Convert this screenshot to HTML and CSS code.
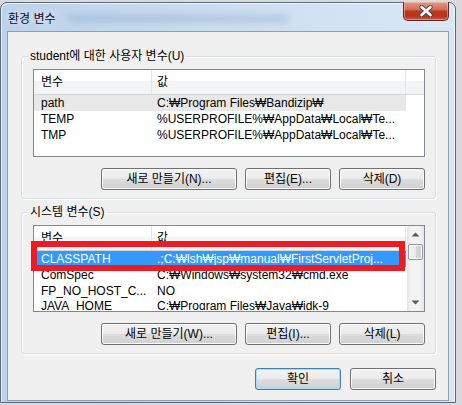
FILE: index.html
```html
<!DOCTYPE html>
<html lang="ko">
<head>
<meta charset="utf-8">
<title>환경 변수</title>
<link rel="stylesheet" href="styles.css">
</head>
<body>
<div class="window">
  <div class="titlebar">
    <span class="title">환경 변수</span>
    <span class="blur"></span>
    <button class="close" aria-label="닫기">
      <svg width="16" height="12" viewBox="0 0 16 12">
        <path d="M3.5 2 L12.5 10 M12.5 2 L3.5 10" stroke="#4a4a4a" stroke-width="4.4" stroke-linecap="round" fill="none"/>
        <path d="M3.5 2 L12.5 10 M12.5 2 L3.5 10" stroke="#ffffff" stroke-width="2.6" stroke-linecap="round" fill="none"/>
      </svg>
    </button>
  </div>
  <div class="client">
    <fieldset class="group first">
      <legend>student에 대한 사용자 변수(U)</legend>
      <div class="list">
        <div class="main">
          <div class="header">
            <div class="c1">변수</div>
            <div class="c2">값</div>
            <div class="c3"></div>
          </div>
          <div class="row gray"><div class="c1">path</div><div class="c2">C:₩Program Files₩Bandizip₩</div></div>
          <div class="row"><div class="c1">TEMP</div><div class="c2">%USERPROFILE%₩AppData₩Local₩Te...</div></div>
          <div class="row"><div class="c1">TMP</div><div class="c2">%USERPROFILE%₩AppData₩Local₩Te...</div></div>
        </div>
      </div>
      <div class="buttons">
        <button class="btn wide">새로 만들기(N)...</button>
        <button class="btn">편집(E)...</button>
        <button class="btn">삭제(D)</button>
      </div>
    </fieldset>

    <fieldset class="group second">
      <legend>시스템 변수(S)</legend>
      <div class="list-wrap">
        <div class="list sys">
          <div class="main">
            <div class="header">
              <div class="c1">변수</div>
              <div class="c2">값</div>
              <div class="c3"></div>
            </div>
            <div class="row selected"><div class="c1">CLASSPATH</div><div class="c2">.;C:₩lsh₩jsp₩manual₩FirstServletProj...</div></div>
            <div class="row"><div class="c1">ComSpec</div><div class="c2">C:₩Windows₩system32₩cmd.exe</div></div>
            <div class="row"><div class="c1">FP_NO_HOST_C...</div><div class="c2">NO</div></div>
            <div class="row last"><div class="c1">JAVA_HOME</div><div class="c2">C:₩Program Files₩Java₩jdk-9</div></div>
          </div>
          <div class="scrollbar">
            <div class="arrow">
              <svg width="9" height="5" viewBox="0 0 9 5"><path d="M0.5 4.5 L4.5 0.5 L8.5 4.5 Z" fill="#5a5a5a"/></svg>
            </div>
            <div class="thumb"></div>
            <div class="track"></div>
            <div class="arrow">
              <svg width="9" height="5" viewBox="0 0 9 5"><path d="M0.5 0.5 L4.5 4.5 L8.5 0.5 Z" fill="#5a5a5a"/></svg>
            </div>
          </div>
        </div>
        <div class="mark"></div>
      </div>
      <div class="buttons">
        <button class="btn wide">새로 만들기(W)...</button>
        <button class="btn">편집(I)...</button>
        <button class="btn">삭제(L)</button>
      </div>
    </fieldset>

    <div class="dialog-buttons">
      <button class="btn default">확인</button>
      <button class="btn">취소</button>
    </div>
  </div>
</div>
</body>
</html>
```

FILE: styles.css
```css
html, body {
  margin: 0;
  padding: 0;
}
body {
  width: 462px;
  height: 405px;
  overflow: hidden;
  background: #d9dadc;
  font-family: "Liberation Sans", "Noto Sans CJK KR", sans-serif;
  font-size: 12px;
  color: #000;
}
.window {
  box-sizing: border-box;
  margin-top: 2px;
  width: 456px;
  height: 401px;
  border: 1px solid #5a6878;
  border-radius: 7px 7px 0 0;
  background: linear-gradient(to right, #bcd2ea 0%, #c8dbef 40%, #d3e3f3 75%, #d9e7f5 100%);
  padding: 0 6px 2px 6px;
  box-shadow: inset 1px 1px 0 rgba(255,255,255,0.7), inset -1px 0 0 rgba(255,255,255,0.6);
}
.titlebar {
  height: 28px;
  display: flex;
  align-items: flex-start;
}
.title {
  margin-left: 1px;
  margin-top: 8px;
  line-height: 14px;
  font-family: "Noto Sans CJK KR", sans-serif;
  font-size: 12px;
  color: #0c0c14;
  text-shadow: 0 0 6px rgba(255,255,255,0.9);
}
.blur {
  margin-left: 12px;
  margin-top: 12px;
  width: 220px;
  height: 7px;
  background: rgba(110,140,180,0.28);
  filter: blur(3px);
}
.close {
  margin-left: auto;
  margin-top: -1px;
  width: 46px;
  height: 19px;
  box-sizing: border-box;
  border: 1px solid #5b2a24;
  border-top: none;
  border-radius: 0 0 5px 5px;
  background: linear-gradient(#e29a88 0%, #d2705c 40%, #bd3620 52%, #b8331f 78%, #cc5a43 100%);
  box-shadow: inset 0 0 0 1px rgba(255,210,200,0.45);
  padding: 0;
  display: flex;
  align-items: center;
  justify-content: center;
}
.client {
  box-sizing: border-box;
  width: 442px;
  height: 370px;
  border: 1px solid #909eb0;
  background: #f0f0f0;
  padding: 0 12px 0 13px;
  display: flex;
  flex-direction: column;
}
.group {
  margin: 0;
  min-width: 0;
  border: 1px solid #d5dfe5;
  border-radius: 3px;
  box-shadow: inset 1px 1px 0 #fff, 1px 1px 0 #fff;
  padding: 6px 10px 8px 11px;
}
.group.first {
  margin-top: 17px;
}
.group.second {
  margin-top: 6px;
}
.group legend {
  padding: 0 2px;
  margin-left: -5px;
  line-height: 14px;
  font-size: 12px;
}
.list-wrap {
  position: relative;
}
.list {
  box-sizing: border-box;
  height: 88px;
  border: 1px solid #828790;
  background: #fff;
  overflow: hidden;
  display: flex;
}
.list.sys {
  height: 87px;
}
.main {
  flex: 1;
  min-width: 0;
}
.header {
  display: flex;
  height: 24px;
  border-bottom: 1px solid #d5d5d5;
  background: linear-gradient(#ffffff 0%, #ffffff 46%, #f3f4f6 46%, #f3f4f6 100%);
  line-height: 24px;
}
.header .c1, .header .c2 {
  border-right: 1px solid #e2e5ea;
}
.c1 {
  box-sizing: border-box;
  width: 118px;
  flex: none;
  padding-left: 7px;
  white-space: nowrap;
  overflow: hidden;
}
.c2 {
  box-sizing: border-box;
  width: 254px;
  flex: none;
  padding-left: 5px;
  white-space: nowrap;
  overflow: hidden;
}
.c3 {
  flex: 1;
}
.row {
  display: flex;
  width: 372px;
  height: 16px;
  line-height: 16px;
}
.row.last {
  height: 11px;
  line-height: 15px;
  overflow: hidden;
}
.row.gray {
  background: #e8e8e8;
}
.row.selected {
  background: #3399ff;
  color: #fff;
}
.scrollbar {
  width: 17px;
  flex: none;
  display: flex;
  flex-direction: column;
  background: linear-gradient(to right, #e4e4e4 0%, #f3f3f3 25%, #f3f3f3 75%, #e6e6e6 100%);
}
.arrow {
  height: 17px;
  display: flex;
  align-items: center;
  justify-content: center;
}
.thumb {
  box-sizing: border-box;
  height: 16px;
  margin: 1px 1px 0 1px;
  border: 1px solid #969696;
  border-radius: 2px;
  background: linear-gradient(to right, #f3f3f3 0%, #e9e9e9 50%, #d6d6d6 50%, #d0d0d0 100%);
  box-shadow: inset 0 0 0 1px #fbfbfb;
}
.track {
  flex: 1;
}
.mark {
  position: absolute;
  left: -2px;
  top: 16px;
  width: 374px;
  height: 30px;
  box-sizing: border-box;
  border: 6px solid #ed1c24;
}
.buttons {
  display: flex;
  justify-content: flex-end;
  gap: 8px;
  margin-top: 11px;
}
.btn {
  box-sizing: border-box;
  width: 86px;
  height: 22px;
  padding: 0;
  border: 1px solid #707070;
  border-radius: 3px;
  background: linear-gradient(#f2f2f2 0%, #ebebeb 48%, #dddddd 52%, #cfcfcf 100%);
  box-shadow: inset 0 0 0 1px #fbfbfb;
  font-family: "Liberation Sans", "Noto Sans CJK KR", sans-serif;
  font-size: 12px;
  line-height: 18px;
  color: #000;
}
.btn.wide {
  width: 136px;
}
.dialog-buttons {
  display: flex;
  justify-content: flex-end;
  gap: 9px;
  margin-top: 14px;
}
.btn.default {
  border-color: #3c7fb1;
  box-shadow: inset 0 0 0 1px #a8dbf7;
}
```
